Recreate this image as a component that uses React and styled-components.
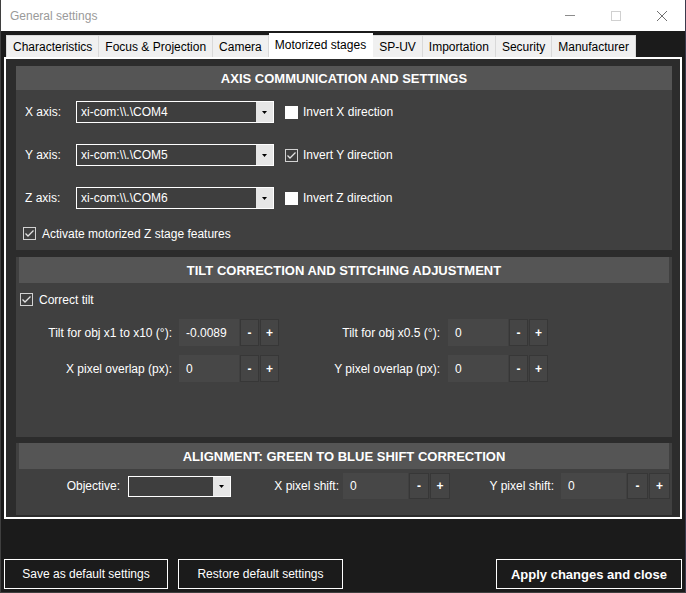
import React from "react";
import styled, { createGlobalStyle } from "styled-components";

const GlobalStyle = createGlobalStyle`
  html, body {
    margin: 0;
    padding: 0;
    background: #1b1b1b;
  }
  body {
    font-family: "Liberation Sans", Arial, sans-serif;
    font-size: 12px;
  }
`;

const Window = styled.div`
  width: 686px;
  height: 593px;
  box-sizing: border-box;
  display: flex;
  flex-direction: column;
  background: #1b1b1b;
  border-left: 1px solid #3f3f3f;
  border-right: 1px solid #3b3a4c;
  border-bottom: 1px solid #3f3f3f;
`;

const TitleBar = styled.div`
  height: 31px;
  flex: none;
  background: #ffffff;
  display: flex;
  align-items: center;
  padding-left: 9px;
  color: #9a9a9a;
  font-size: 12px;
`;

const TitleText = styled.span`
  flex: 1;
`;

const WinButton = styled.div`
  width: 46px;
  height: 31px;
  display: flex;
  align-items: center;
  justify-content: center;
`;

const Body = styled.div`
  flex: 1;
  padding: 2px 3px 0 3px;
  display: flex;
  flex-direction: column;
`;

const TabStrip = styled.div`
  display: flex;
  align-items: flex-end;
  padding-left: 2px;
  height: 24px;
  position: relative;
  z-index: 1;
`;

const Tab = styled.div`
  box-sizing: border-box;
  height: ${(p) => (p.$active ? 26 : 22)}px;
  margin-bottom: ${(p) => (p.$active ? -2 : 0)}px;
  padding: ${(p) => (p.$active ? "0 6px 3px" : "0 6px")};
  display: flex;
  align-items: center;
  background: ${(p) => (p.$active ? "#ffffff" : "#f0f0f0")};
  border: 1px solid ${(p) => (p.$active ? "#ffffff" : "#d9d9d9")};
  border-left-width: ${(p) => (p.$first ? 1 : 0)}px;
  border-bottom: none;
  color: #000;
  font-size: 12px;
  white-space: nowrap;
`;

const Panel = styled.div`
  height: 462px;
  box-sizing: border-box;
  border: 2px solid #ffffff;
  background: #2c2c2c;
  padding: 7px 8px 0 10px;
  display: flex;
  flex-direction: column;
`;

const Section = styled.div`
  height: ${(p) => p.$h}px;
  margin-top: ${(p) => p.$mt || 0}px;
  background: #404040;
  display: flex;
  flex-direction: column;
  flex: none;
`;

const SectionHeader = styled.div`
  height: ${(p) => p.$h}px;
  margin: 0 ${(p) => p.$inset || 0}px;
  background: #555555;
  color: #ffffff;
  font-weight: bold;
  font-size: 13px;
  display: flex;
  align-items: center;
  justify-content: center;
  flex: none;
`;

const AxisRow = styled.div`
  display: flex;
  align-items: center;
  height: 22px;
  padding-left: 9px;
  margin-top: ${(p) => p.$mt}px;
  color: #ffffff;
`;

const AxisLabel = styled.span`
  width: 51px;
`;

const Combo = styled.div`
  width: ${(p) => p.$w}px;
  height: ${(p) => p.$h}px;
  box-sizing: border-box;
  border: 1px solid #ffffff;
  background: #3e3e3e;
  display: flex;
`;

const ComboText = styled.span`
  flex: 1;
  padding-left: 4px;
  display: flex;
  align-items: center;
  color: #ffffff;
`;

const ComboArrow = styled.span`
  width: 17px;
  background: #e6e6e6;
  display: flex;
  align-items: center;
  justify-content: center;
`;

const CheckRow = styled.div`
  display: flex;
  align-items: center;
  height: 13px;
  margin-top: ${(p) => p.$mt || 0}px;
  margin-left: ${(p) => p.$ml || 0}px;
  gap: ${(p) => p.$gap || 5}px;
  color: #ffffff;
`;

const Box = styled.span`
  width: 13px;
  height: 13px;
  box-sizing: border-box;
  border: 1px solid ${(p) => (p.$checked ? "#d2d2d2" : "#ffffff")};
  background: ${(p) => (p.$checked ? "#3f3f3f" : "#ffffff")};
  display: inline-flex;
  align-items: center;
  justify-content: center;
  flex: none;
`;

const SpinGrid = styled.div`
  display: grid;
  grid-template-columns: ${(p) => p.$cols};
  row-gap: 9px;
  margin-top: ${(p) => p.$mt}px;
  align-items: center;
`;

const FieldLabel = styled.span`
  color: #ffffff;
  text-align: right;
  padding-right: ${(p) => p.$pr}px;
  white-space: nowrap;
`;

const SpinBox = styled.div`
  display: flex;
  gap: 1px;
  height: ${(p) => p.$h}px;
`;

const SpinField = styled.div`
  width: ${(p) => p.$w}px;
  box-sizing: border-box;
  padding-left: 7px;
  background: #474747;
  color: #ffffff;
  display: flex;
  align-items: center;
`;

const SpinButton = styled.div`
  width: ${(p) => p.$w}px;
  box-sizing: border-box;
  border: 1px solid #373737;
  background: #454545;
  color: #ffffff;
  font-weight: bold;
  display: flex;
  align-items: center;
  justify-content: center;
`;

const Footer = styled.div`
  display: flex;
  margin-top: 40px;
`;

const FooterButton = styled.div`
  width: ${(p) => p.$w}px;
  height: 30px;
  box-sizing: border-box;
  border: 1px solid #ffffff;
  margin-left: ${(p) => p.$ml || "0"};
  color: #ffffff;
  font-size: ${(p) => (p.$bold ? 13 : 12)}px;
  font-weight: ${(p) => (p.$bold ? "bold" : "normal")};
  display: flex;
  align-items: center;
  justify-content: center;
`;

const tabs = [
  "Characteristics",
  "Focus & Projection",
  "Camera",
  "Motorized stages",
  "SP-UV",
  "Importation",
  "Security",
  "Manufacturer",
];

const axes = [
  { name: "X", port: "xi-com:\\\\.\\COM4", inverted: false },
  { name: "Y", port: "xi-com:\\\\.\\COM5", inverted: true },
  { name: "Z", port: "xi-com:\\\\.\\COM6", inverted: false },
];

const Arrow = () => (
  <svg width="5" height="3" viewBox="0 0 5 3">
    <path d="M0 0H5L2.5 3Z" fill="#000" />
  </svg>
);

const CheckBox = ({ checked }) => (
  <Box $checked={checked}>
    {checked && (
      <svg width="11" height="11" viewBox="0 0 11 11">
        <polyline points="1.5,5.5 4,8 9.5,2.5" fill="none" stroke="#e2e2e2" strokeWidth="1.3" />
      </svg>
    )}
  </Box>
);

const Spinner = ({ value, h, fw, bw }) => (
  <SpinBox $h={h}>
    <SpinField $w={fw}>{value}</SpinField>
    <SpinButton $w={bw}>-</SpinButton>
    <SpinButton $w={bw}>+</SpinButton>
  </SpinBox>
);

const App = () => {
  return (
    <>
      <GlobalStyle />
      <Window>
        <TitleBar>
          <TitleText>General settings</TitleText>
          <WinButton>
            <svg width="10" height="1"><rect width="10" height="1" fill="#8c8c8c" /></svg>
          </WinButton>
          <WinButton>
            <svg width="10" height="10"><rect x="0.5" y="0.5" width="9" height="9" fill="none" stroke="#d0d0d0" /></svg>
          </WinButton>
          <WinButton>
            <svg width="10" height="10" viewBox="0 0 10 10">
              <path d="M0 0L10 10M10 0L0 10" stroke="#707070" strokeWidth="1" />
            </svg>
          </WinButton>
        </TitleBar>

        <Body>
          <TabStrip>
            {tabs.map((t, i) => (
              <Tab key={t} $first={i === 0} $active={t === "Motorized stages"}>{t}</Tab>
            ))}
          </TabStrip>

          <Panel>
            <Section $h={184}>
              <SectionHeader $h={24}>AXIS COMMUNICATION AND SETTINGS</SectionHeader>
              {axes.map((a, i) => (
                <AxisRow key={a.name} $mt={i === 0 ? 11 : 21}>
                  <AxisLabel>{a.name} axis:</AxisLabel>
                  <Combo $w={198} $h={22}>
                    <ComboText>{a.port}</ComboText>
                    <ComboArrow><Arrow /></ComboArrow>
                  </Combo>
                  <CheckRow $ml={11}>
                    <CheckBox checked={a.inverted} />
                    <span>Invert {a.name} direction</span>
                  </CheckRow>
                </AxisRow>
              ))}
              <CheckRow $mt={18} $ml={7} $gap={6}>
                <CheckBox checked />
                <span>Activate motorized Z stage features</span>
              </CheckRow>
            </Section>

            <Section $h={180} $mt={7}>
              <SectionHeader $h={26} $inset={3}>TILT CORRECTION AND STITCHING ADJUSTMENT</SectionHeader>
              <CheckRow $mt={10} $ml={4} $gap={6}>
                <CheckBox checked />
                <span>Correct tilt</span>
              </CheckRow>
              <SpinGrid $cols="163px 100px 169px 100px" $mt={13}>
                <FieldLabel $pr={7}>Tilt for obj x1 to x10 (°):</FieldLabel>
                <Spinner value="-0.0089" h={27} fw={60} bw={19} />
                <FieldLabel $pr={8}>Tilt for obj x0.5 (°):</FieldLabel>
                <Spinner value="0" h={27} fw={60} bw={19} />
                <FieldLabel $pr={7}>X pixel overlap (px):</FieldLabel>
                <Spinner value="0" h={27} fw={60} bw={19} />
                <FieldLabel $pr={8}>Y pixel overlap (px):</FieldLabel>
                <Spinner value="0" h={27} fw={60} bw={19} />
              </SpinGrid>
            </Section>

            <Section $h={72} $mt={6}>
              <SectionHeader $h={26} $inset={3}>ALIGNMENT: GREEN TO BLUE SHIFT CORRECTION</SectionHeader>
              <SpinGrid $cols="112px 103px 112px 108px 110px 109px" $mt={4}>
                <FieldLabel $pr={8}>Objective:</FieldLabel>
                <Combo $w={103} $h={21}>
                  <ComboText />
                  <ComboArrow><Arrow /></ComboArrow>
                </Combo>
                <FieldLabel $pr={4}>X pixel shift:</FieldLabel>
                <Spinner value="0" h={26} fw={65} bw={20} />
                <FieldLabel $pr={7}>Y pixel shift:</FieldLabel>
                <Spinner value="0" h={26} fw={65} bw={21} />
              </SpinGrid>
            </Section>
          </Panel>

          <Footer>
            <FooterButton $w={164}>Save as default settings</FooterButton>
            <FooterButton $w={165} $ml="10px">Restore default settings</FooterButton>
            <FooterButton $w={186} $ml="auto" $bold>Apply changes and close</FooterButton>
          </Footer>
        </Body>
      </Window>
    </>
  );
};

export default App;
